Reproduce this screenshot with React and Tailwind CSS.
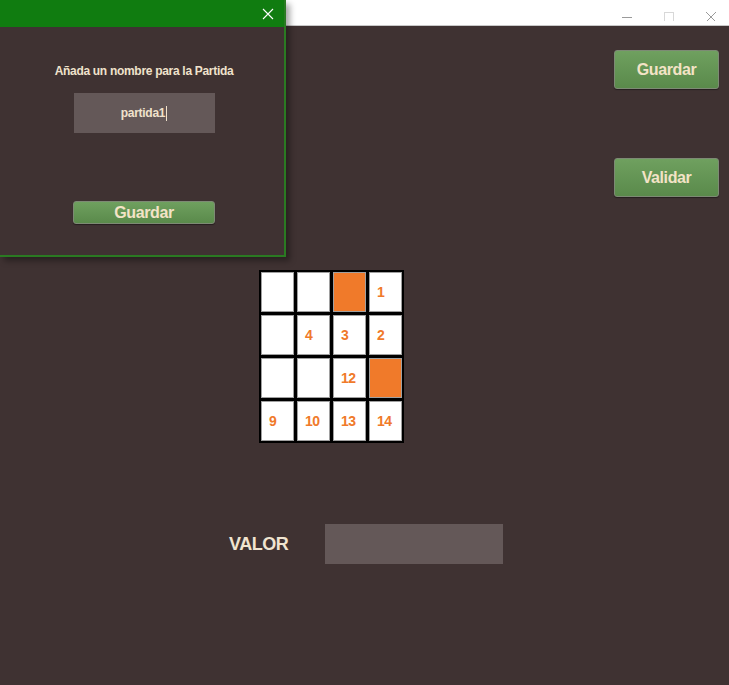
import React from "react";

const font = { fontFamily: '"Liberation Sans", Arial, sans-serif' };

const cells = [
    { v: "" }, { v: "" }, { v: "", fill: true }, { v: "1" },
    { v: "" }, { v: "4" }, { v: "3" }, { v: "2" },
    { v: "" }, { v: "" }, { v: "12" }, { v: "", fill: true },
    { v: "9" }, { v: "10" }, { v: "13" }, { v: "14" },
];

const GreenButton = ({ children, className }) => (
    <button
        className={`rounded-[3px] border border-[#7d8a74] bg-gradient-to-b from-[#6fa05f] to-[#5a8a4b] font-bold tracking-[-0.4px] text-[#f3e3c6] shadow-[0_1px_1px_rgba(0,0,0,0.4)] ${className}`}
    >
        {children}
    </button>
);

const App = () => {
    return (
        <div className="relative flex h-[685px] w-[729px] flex-col overflow-hidden bg-[#3f3232]" style={font}>
            {/* window title bar */}
            <div className="flex h-[26px] shrink-0 items-center justify-end border-b border-[#c8c8c8] bg-white pr-[10px]">
                <div className="flex items-center gap-[26px] text-[#9a9a9a]">
                    <svg width="16" height="16" viewBox="0 0 16 16"><path d="M3 12.5h10" stroke="currentColor" strokeWidth="1" /></svg>
                    <svg width="16" height="16" viewBox="0 0 16 16"><rect x="3.5" y="7.5" width="9" height="9" fill="none" stroke="#d8d8d8" strokeWidth="1" /></svg>
                    <svg width="16" height="16" viewBox="0 0 16 16"><path d="M3 7l10 10M13 7L3 17" stroke="currentColor" strokeWidth="1" /></svg>
                </div>
            </div>

            {/* main content */}
            <div className="flex flex-1 flex-col">
                <div className="flex justify-end pr-[10px] pt-[24px]">
                    <div className="flex flex-col gap-[69px]">
                        <GreenButton className="h-[39px] w-[105px] text-[16px]">Guardar</GreenButton>
                        <GreenButton className="h-[39px] w-[105px] text-[16px]">Validar</GreenButton>
                    </div>
                </div>

                <div className="ml-[259px] mt-[73px] grid w-max grid-cols-[repeat(4,33px)] gap-[3px] bg-black p-[2px]">
                    {cells.map((c, i) => (
                        <div
                            key={i}
                            className={`flex h-[40px] items-center border border-[#a0a0a0] pl-[7px] text-[14px] font-bold tracking-[-0.5px] text-[#f07a2a] ${c.fill ? "bg-[#f07a2a]" : "bg-white"}`}
                        >
                            {c.v}
                        </div>
                    ))}
                </div>

                <div className="ml-[229px] mt-[81px] flex items-center">
                    <span className="w-[96px] text-[18px] font-bold tracking-[-0.5px] text-[#f0e4d0]">VALOR</span>
                    <div className="h-[40px] w-[178px] bg-[#645858]" />
                </div>
            </div>

            {/* dialog */}
            <div className="absolute left-0 top-0 flex h-[257px] w-[286px] flex-col border-b-2 border-r-2 border-[#2a7a22] bg-[#3f3232] shadow-[4px_4px_6px_rgba(0,0,0,0.35)]">
                <div className="flex h-[27px] shrink-0 items-center justify-end bg-[#107c10] pr-[10px]">
                    <svg width="12" height="12" viewBox="0 0 12 12"><path d="M1 1l10 10M11 1L1 11" stroke="white" strokeWidth="1.1" /></svg>
                </div>
                <div className="flex flex-col items-center pl-[4px] pt-[35px]">
                    <p className="text-[12px] font-bold tracking-[-0.3px] text-[#f0e2cc]">Añada un nombre para la Partida</p>
                    <div className="mt-[13px] flex h-[40px] w-[141px] items-center justify-center bg-[#645858] text-[12px] font-bold tracking-[-0.3px] text-[#f0e2cc]">
                        partida1<span className="ml-px h-[15px] w-px bg-[#f0e2cc]" />
                    </div>
                    <GreenButton className="mt-[68px] h-[23px] w-[142px] text-[16px] leading-none">Guardar</GreenButton>
                </div>
            </div>
        </div>
    );
};

export default App;
